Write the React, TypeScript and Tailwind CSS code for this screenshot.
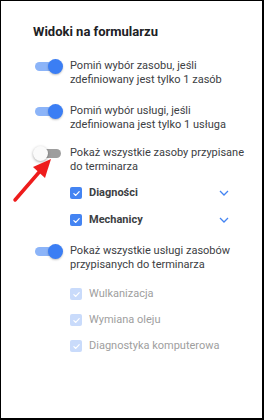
import React from "react";

const Toggle = ({ on }: { on: boolean }) => {
  return (
    <div className="relative w-[30px] h-[15px] shrink-0 flex items-center">
      <div className={`w-[26px] h-[9px] ml-[2px] rounded-full ${on ? "bg-[#8cb4f8]" : "bg-[#9e9e9e]"}`} />
      {on ? (
        <div className="absolute right-0 top-0 w-[15px] h-[15px] rounded-full bg-[#3b7ef4] shadow-[0_1px_2px_rgba(0,0,0,0.25)]" />
      ) : (
        <div className="absolute left-0 top-0 w-[15px] h-[15px] rounded-full bg-[#fafafa] shadow-[0_1px_3px_rgba(0,0,0,0.35)]" />
      )}
    </div>
  );
};

const Check = ({ disabled }: { disabled?: boolean }) => {
  return (
    <div className={`w-[12px] h-[12px] rounded-[2px] flex items-center justify-center shrink-0 ${disabled ? "bg-[#c9dbfb]" : "bg-[#4484f2]"}`}>
      <svg width="9" height="9" viewBox="0 0 12 12" fill="none">
        <path d="M2.5 6.2 L5 8.6 L9.6 3.6" stroke="white" strokeWidth="1.6" strokeLinecap="round" strokeLinejoin="round" />
      </svg>
    </div>
  );
};

const ToggleRow = ({ on, lines, className }: { on: boolean; lines: string[]; className?: string }) => {
  return (
    <div className={`flex items-start gap-[7px] ${className ?? ""}`}>
      <Toggle on={on} />
      <div className="text-[11px] leading-[14px] text-[#3c4043]">
        {lines.map((l) => (
          <div key={l}>{l}</div>
        ))}
      </div>
    </div>
  );
};

const Chevron = () => (
  <svg width="10" height="6" viewBox="0 0 10 6" fill="none">
    <path d="M1 1 L5 5 L9 1" stroke="#4484f2" strokeWidth="1.3" />
  </svg>
);

export default function App() {
  return (
    <div className="w-[264px] h-[420px] bg-white border-l border-t border-r-2 border-b-2 border-black relative font-['Roboto',sans-serif]">
      <div className="pl-[32px] pt-[23px]">
        <h2 className="text-[13px] leading-[16px] font-bold text-[#202124]">Widoki na formularzu</h2>

        <ToggleRow on className="mt-[19px]" lines={["Pomiń wybór zasobu, jeśli", "zdefiniowany jest tylko 1 zasób"]} />
        <ToggleRow on className="mt-[17px]" lines={["Pomiń wybór usługi, jeśli", "zdefiniowana jest tylko 1 usługa"]} />
        <ToggleRow on={false} className="mt-[14px]" lines={["Pokaż wszystkie zasoby przypisane", "do terminarza"]} />

        <div className="pl-[37px] pr-[33px] mt-[12px] flex flex-col gap-[13px]">
          <div className="flex items-center gap-[7px] h-[14px]">
            <Check />
            <span className="text-[11px] font-bold text-[#3c4043] flex-1">Diagności</span>
            <Chevron />
          </div>
          <div className="flex items-center gap-[7px] h-[14px]">
            <Check />
            <span className="text-[11px] font-bold text-[#3c4043] flex-1">Mechanicy</span>
            <Chevron />
          </div>
        </div>

        <ToggleRow on className="mt-[17px]" lines={["Pokaż wszystkie usługi zasobów", "przypisanych do terminarza"]} />

        <div className="pl-[37px] mt-[15px] flex flex-col gap-[12px]">
          {["Wulkanizacja", "Wymiana oleju", "Diagnostyka komputerowa"].map((t) => (
            <div key={t} className="flex items-center gap-[7px] h-[14px]">
              <Check disabled />
              <span className="text-[11px] text-[#9e9e9e]">{t}</span>
            </div>
          ))}
        </div>
      </div>

      <svg className="absolute left-[10px] top-[155px]" width="44" height="48" viewBox="0 0 44 48">
        <path d="M4 44 L30 14" stroke="#ee1c1c" strokeWidth="3.5" strokeLinecap="round" />
        <path d="M40 3 L22 11 L34 22 Z" fill="#ee1c1c" />
      </svg>
    </div>
  );
}
